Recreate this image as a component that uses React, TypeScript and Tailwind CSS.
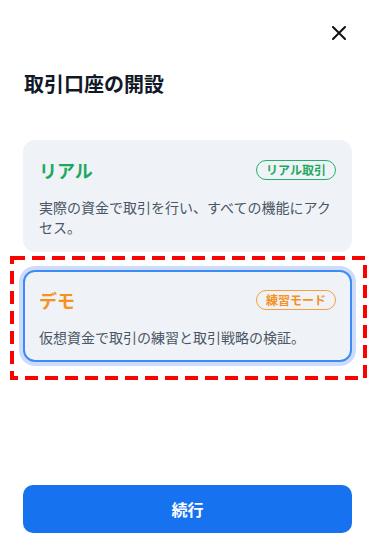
import { useState } from "react";

const accounts = [
  {
    id: "real",
    title: "リアル",
    badge: "リアル取引",
    desc: "実際の資金で取引を行い、すべての機能にアクセス。",
    color: "text-[#1fa95f]",
    badgeBorder: "border-[#22b06a]",
  },
  {
    id: "demo",
    title: "デモ",
    badge: "練習モード",
    desc: "仮想資金で取引の練習と取引戦略の検証。",
    color: "text-[#f5921e]",
    badgeBorder: "border-[#f5a03a]",
  },
];

export default function App() {
  const [selected, setSelected] = useState("demo");

  return (
    <div
      className="h-[556px] w-[375px] flex flex-col bg-white px-[23px] pb-[23px]"
      style={{ fontFamily: '"Noto Sans CJK JP", "Noto Sans", sans-serif' }}
    >
      <div className="flex justify-end pt-[26px] pr-[6px]">
        <button className="text-gray-900" aria-label="閉じる">
          <svg width="14" height="14" viewBox="0 0 14 14" fill="none">
            <path d="M1 1L13 13M13 1L1 13" stroke="#111" strokeWidth="2" strokeLinecap="round" />
          </svg>
        </button>
      </div>

      <h1 className="mt-[30px] pl-px text-xl leading-7 font-bold text-[#111827]">取引口座の開設</h1>

      <div className="mt-[42px] flex flex-col gap-[18px]">
        {accounts.map((a) => {
          const active = selected === a.id;
          return (
            <div key={a.id} className="relative">
              <div
                onClick={() => setSelected(a.id)}
                className={
                  "rounded-xl bg-[#eff3f8] border-2 px-[14px] pt-[14px] pb-[13px] " +
                  (active ? "border-[#3b8cf6] ring-4 ring-[#cfdbfb]" : "border-[#eff3f8]")
                }
              >
                <div className="flex h-7 items-center justify-between">
                  <span className={"text-lg font-bold " + a.color}>{a.title}</span>
                  <span
                    className={
                      "h-5 rounded-full border px-[9px] text-xs leading-[18px] font-bold " +
                      a.color +
                      " " +
                      a.badgeBorder
                    }
                  >
                    {a.badge}
                  </span>
                </div>
                <p className="mt-[13px] text-sm leading-5 text-[#4b5563]">{a.desc}</p>
              </div>
              {active && (
                <svg
                  className="absolute left-[-13px] top-[-14px] pointer-events-none"
                  width="357"
                  height="124"
                  viewBox="0 0 357 124"
                >
                  <rect
                    x="2"
                    y="2"
                    width="353"
                    height="120"
                    fill="none"
                    stroke="#ff0000"
                    strokeWidth="4"
                    strokeDasharray="13 7"
                  />
                </svg>
              )}
            </div>
          );
        })}
      </div>

      <button className="mt-auto h-12 w-full rounded-[10px] bg-[#1672ee] text-base font-bold text-white">
        続行
      </button>
    </div>
  );
}
